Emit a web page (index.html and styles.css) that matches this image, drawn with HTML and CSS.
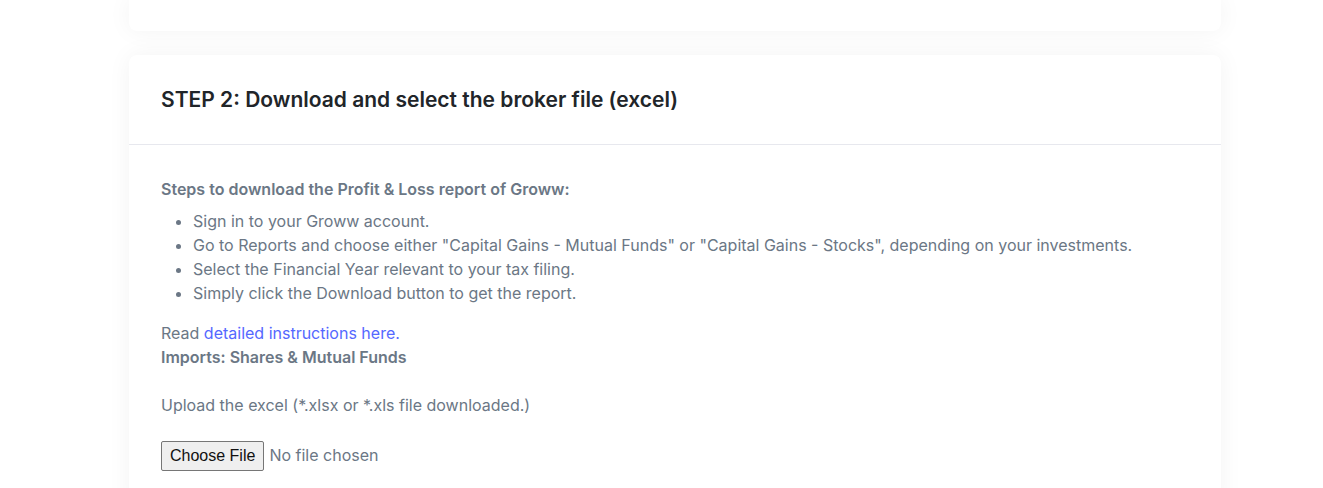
FILE: index.html
```html
<!DOCTYPE html>
<html lang="en">
<head>
    <meta charset="UTF-8">
    <meta name="viewport" content="width=device-width, initial-scale=1.0">
    <title>Import broker file</title>
    <link rel="stylesheet" href="styles.css">
</head>
<body>

<div class="container">
    <div class="card card-prev"></div>

    <div class="card">
        <div class="card-header">
            <h2>STEP 2: Download and select the broker file (excel)</h2>
        </div>
        <div class="card-body">
            <p class="steps-title">Steps to download the Profit &amp; Loss report of Groww:</p>
            <ul class="steps">
                <li>Sign in to your Groww account.</li>
                <li>Go to Reports and choose either "Capital Gains - Mutual Funds" or "Capital Gains - Stocks", depending on your investments.</li>
                <li>Select the Financial Year relevant to your tax filing.</li>
                <li>Simply click the Download button to get the report.</li>
            </ul>
            <p class="read">Read <a href="#">detailed instructions here.</a></p>
            <p class="imports">Imports: Shares &amp; Mutual Funds</p>

            <p class="upload">Upload the excel (*.xlsx or *.xls file downloaded.)</p>
            <input type="file" id="archivo" accept=".xlsx,.xls">
        </div>
    </div>
</div>

</body>
</html>
```

FILE: styles.css
```css
body {
    font-family: Inter, "Noto Sans", sans-serif;
    background-color: #fff;
    color: #6b7785;
    margin: 0;
    padding: 0;
}

.container {
    width: 1092px;
    margin-left: 129px;
    display: flex;
    flex-direction: column;
    gap: 24px;
}

.card {
    background-color: #fff;
    border-radius: 8px;
    box-shadow: 0 0 24px rgba(0, 0, 0, 0.05);
}

.card-prev {
    height: 31px;
    border-radius: 0 0 8px 8px;
}

.card-header {
    height: 89px;
    padding: 0 32px;
    display: flex;
    align-items: center;
    border-bottom: 1px solid #e7e8ee;
}

.card-header h2 {
    margin: 0;
    font-size: 21px;
    font-weight: 600;
    color: #212529;
}

.card-body {
    padding: 32px 32px 40px 32px;
    font-size: 16px;
    line-height: 24px;
}

.card-body p {
    margin: 0;
}

.steps-title,
.imports {
    font-weight: 600;
}

.steps {
    margin: 8px 0 16px 0;
    padding-left: 32px;
}

.read a {
    color: #5468ff;
    text-decoration: none;
}

.card-body .upload {
    margin: 24px 0;
}

input[type="file"] {
    font-family: inherit;
    font-size: 16px;
    color: #6b7785;
}

input[type="file"]::file-selector-button {
    font-family: "Liberation Sans", Arial, sans-serif;
    font-size: 16px;
    color: #111;
    padding: 5px 8px;
    margin-right: 5px;
    background-color: #efefef;
    border: 1px solid #767676;
    border-radius: 2px;
}
```
